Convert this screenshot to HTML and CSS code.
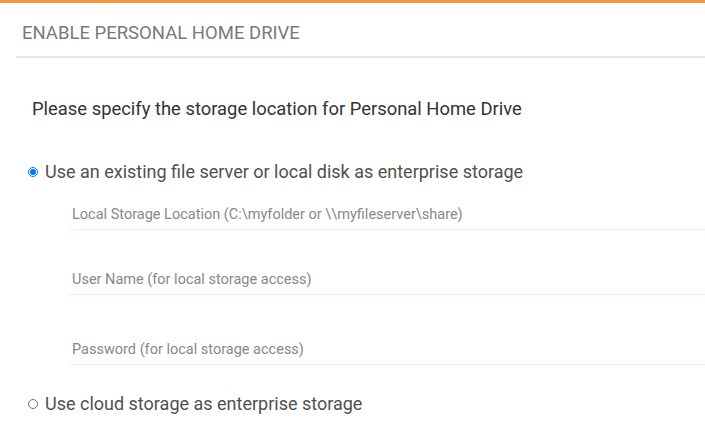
FILE: index.html
```html
<!DOCTYPE html>
<html>
<head>
<meta charset="utf-8">
<link rel="stylesheet" href="styles.css">
</head>
<body>
<div class="page">
  <div class="panel">
    <div class="panel-head">ENABLE PERSONAL HOME DRIVE</div>
    <div class="panel-body">
      <p class="lead">Please specify the storage location for Personal Home Drive</p>
      <label class="option">
        <input type="radio" name="storage" class="radio" checked>
        <span>Use an existing file server or local disk as enterprise storage</span>
      </label>
      <div class="fields">
        <input class="field" type="text" placeholder="Local Storage Location (C:\myfolder or \\myfileserver\share)">
        <input class="field" type="text" placeholder="User Name (for local storage access)">
        <input class="field field-pass" type="password" placeholder="Password (for local storage access)">
      </div>
      <label class="option option-cloud">
        <input type="radio" name="storage" class="radio">
        <span>Use cloud storage as enterprise storage</span>
      </label>
    </div>
  </div>
</div>
</body>
</html>
```
FILE: styles.css
```css
html, body {
  margin: 0;
  padding: 0;
  background: #ffffff;
}
.page {
  border-top: 3px solid #f7963b;
  font-family: Roboto, "Liberation Sans", Arial, sans-serif;
}
.panel {
  margin-left: 16px;
}
.panel-head {
  height: 55px;
  box-sizing: border-box;
  padding: 20px 0 0 6px;
  font-size: 18.5px;
  line-height: 20px;
  color: #7a7a7a;
  border-bottom: 2px solid #e6e6e6;
}
.lead {
  margin: 0;
  padding: 40px 0 0 16px;
  font-size: 18.4px;
  line-height: 22px;
  color: #333333;
}
.option {
  display: flex;
  align-items: center;
  gap: 7px;
  margin: 41px 0 0 12px;
  font-size: 18px;
  line-height: 22px;
  color: #505050;
}
.radio {
  width: 10px;
  height: 10px;
  margin: 0;
  flex: none;
}
.fields {
  display: flex;
  flex-direction: column;
  gap: 34px;
  padding: 16px 0 0 53px;
}
.field {
  display: block;
  width: 100%;
  box-sizing: border-box;
  border: 0;
  border-bottom: 1px solid #fbe9d9;
  padding: 6px 3px 6px 3px;
  font-family: Roboto, "Liberation Sans", Arial, sans-serif;
  font-size: 14.5px;
  line-height: 18px;
  height: 31px;
  outline: none;
  background: transparent;
}
.field::placeholder {
  color: #888888;
}
.field-pass {
  margin-top: 5px;
}
.option-cloud {
  margin-top: 28px;
}
```
